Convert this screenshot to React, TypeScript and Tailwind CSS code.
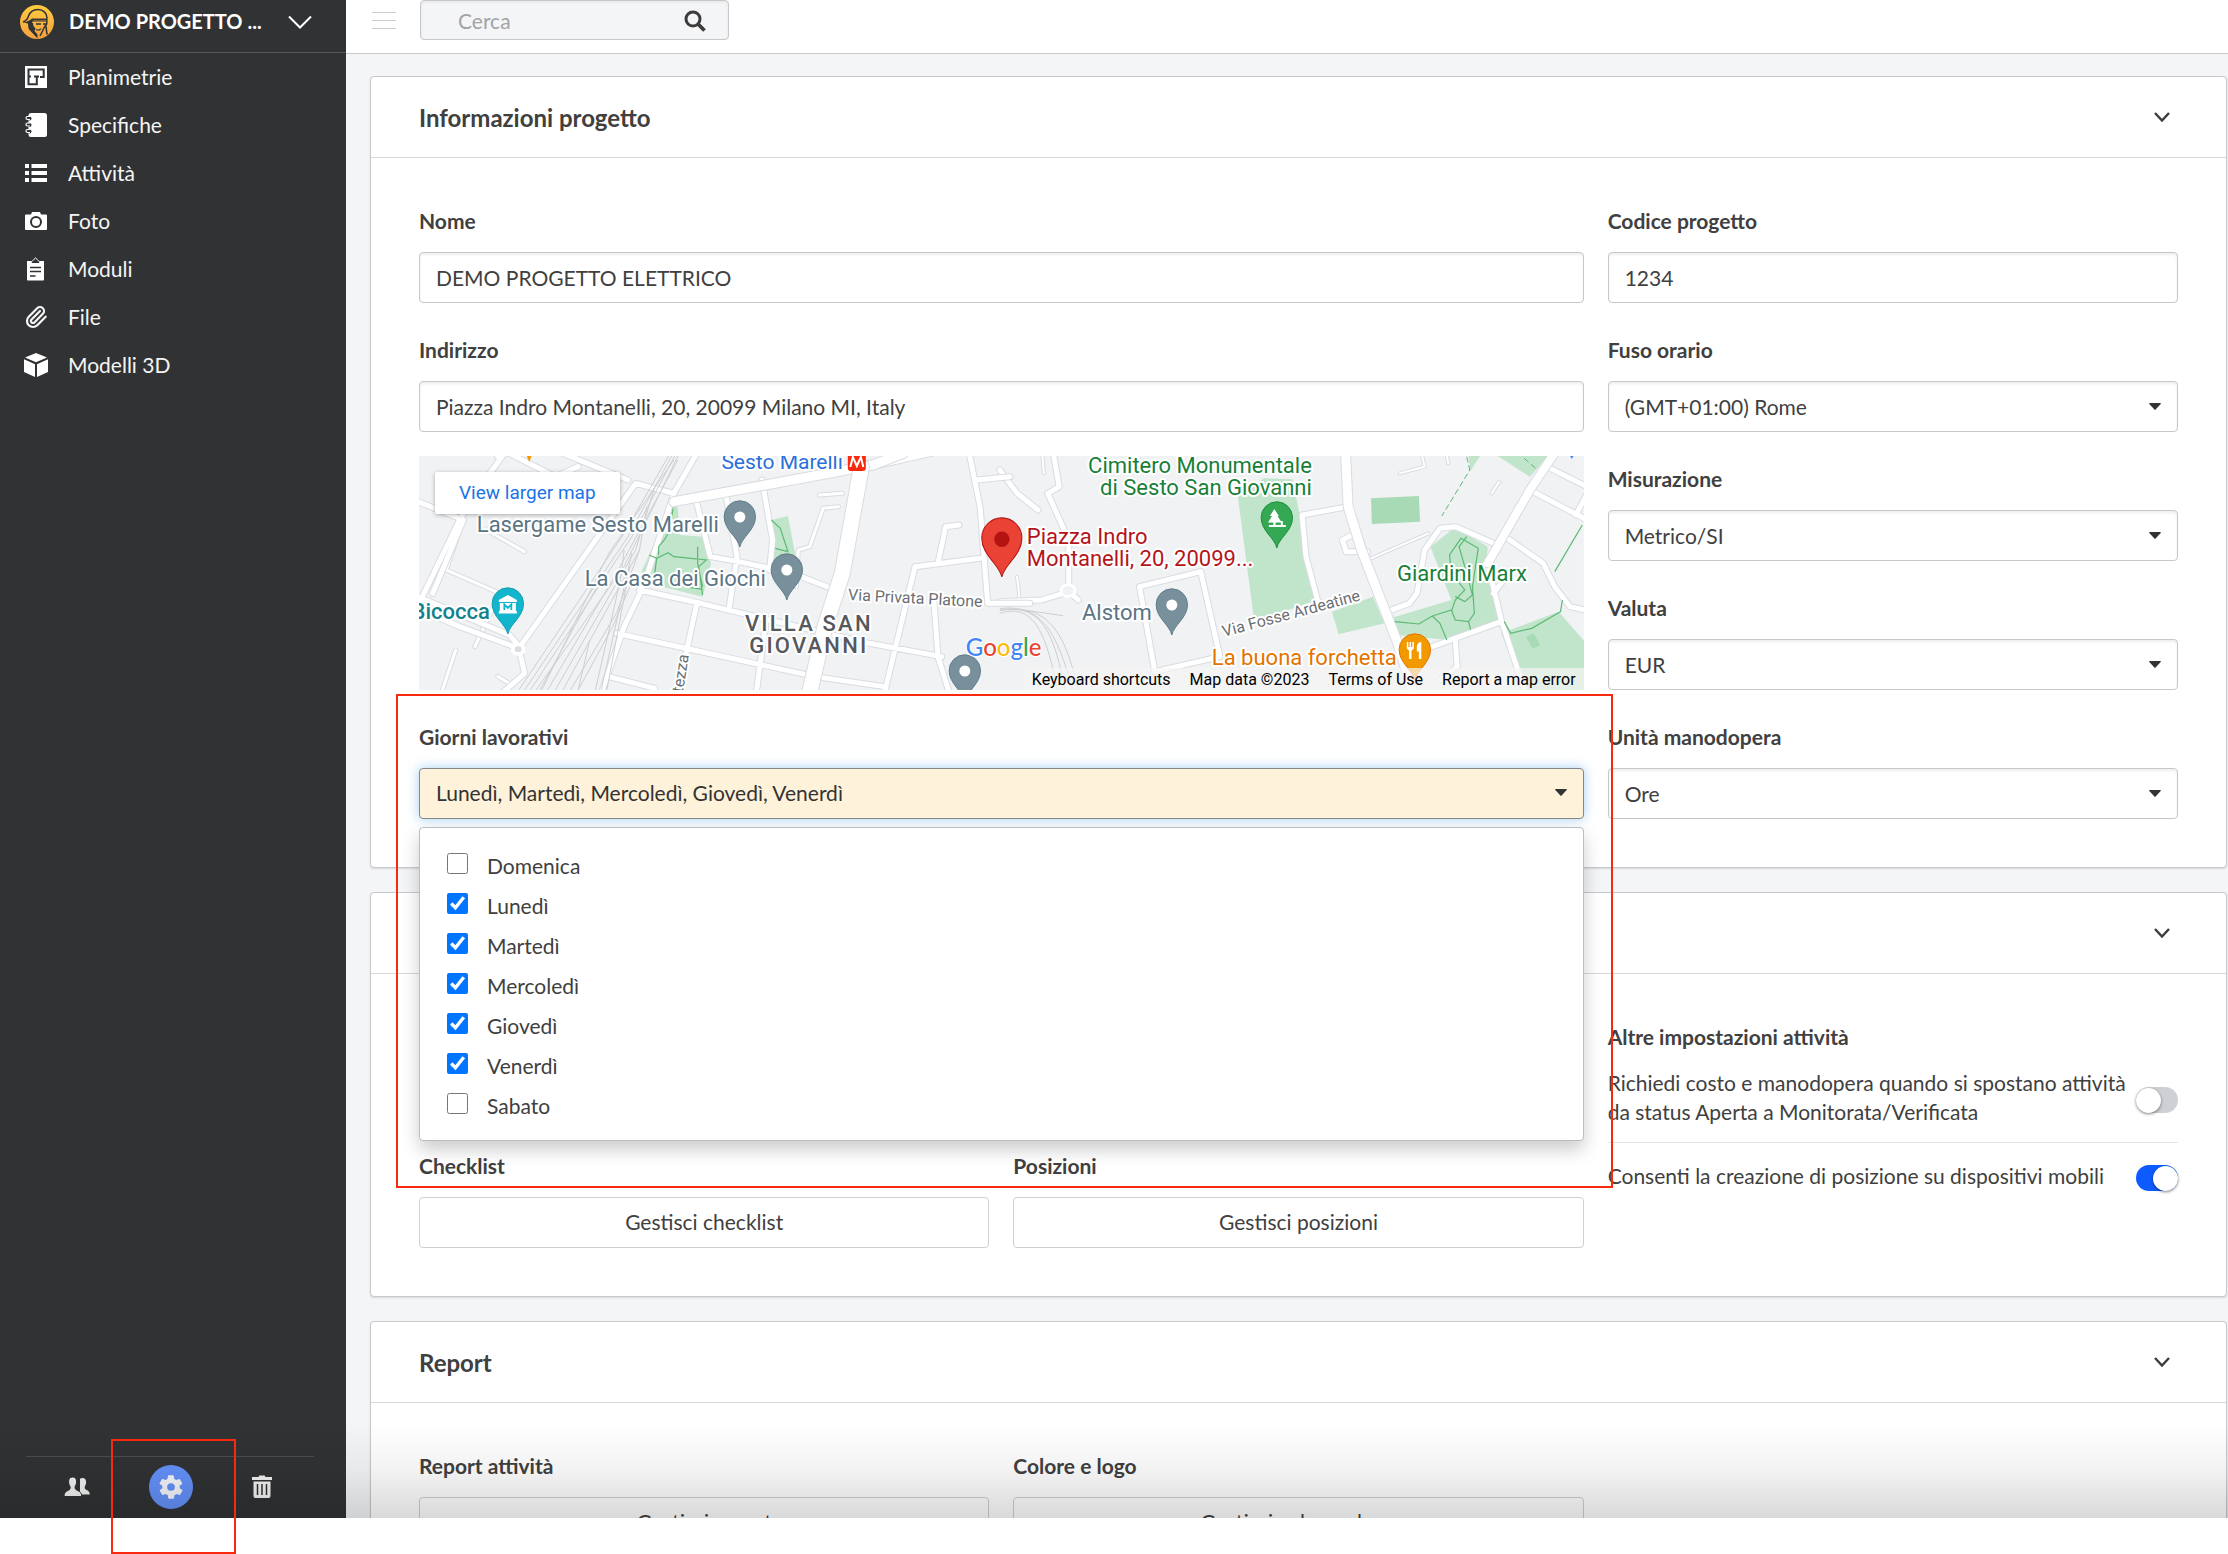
import { useState } from 'react';
import type { ReactNode } from 'react';
import { Paperclip } from 'lucide-react';

interface ChildrenProps {
  children: ReactNode;
}

/* ---------- icons ---------- */

function Logo() {
  return (
    <svg viewBox="0 0 34 34" className="size-[34px] shrink-0" aria-hidden="true">
      <defs>
        <linearGradient id="logo-fill" x1="0" y1="0" x2="0" y2="1">
          <stop offset="0" stopColor="#fdcb3f" />
          <stop offset="1" stopColor="#f5a040" />
        </linearGradient>
      </defs>
      <circle cx="17" cy="17" r="17" fill="url(#logo-fill)" />
      <path d="M3 17c3-1 4.500-2.500 5.500-6C10 7 13.500 4.500 18 4.500c5 0 9 3.500 9 8.500" fill="none" stroke="#303234" strokeWidth="1.500" />
      <path d="M2.500 16.800c4 .4 6.500-.8 9.500-3.300h14v1.800H13.500c-1 1-1.500 2-1.500 3.200H7.500l-5-1.700Z" fill="#303234" />
      <path d="M12 16.500h14v-1H13Z" fill="#303234" />
      <path d="M12 13.600h14.500" stroke="#a9763a" strokeWidth="0.800" />
      <path d="M8 18h5c0 2.500 1 4 2.500 5.500l-1 2.500 3 3.500v4L11 26.500C8.500 25 8 22 8 18Z" fill="#303234" />
      <path d="M26.800 13v5.500c0 2.500-3 3-3.500 6L20 31" fill="none" stroke="#303234" strokeWidth="1.500" />
      <path d="M16 19h5M23 19h3" stroke="#303234" strokeWidth="1.400" />
      <path d="M16 24.500c2 1 4 .5 5-1" fill="none" stroke="#303234" strokeWidth="1.200" />
      <path d="M25 20c2.500 3 .5 7 2.500 9.500" fill="none" stroke="#303234" strokeWidth="1.600" />
    </svg>
  );
}

function PlanIcon() {
  return (
    <svg viewBox="0 0 22 22" className="size-[22px]" aria-hidden="true">
      <rect width="22" height="22" fill="#fff" />
      <path d="M3.500 10V3.500h15.200V11H15M3.500 9v9.300h8.300V10.500M9 10.500h5M3.500 10.500H6" fill="none" stroke="#303234" strokeWidth="2" />
    </svg>
  );
}

function NotebookIcon() {
  return (
    <svg viewBox="0 0 22 24" className="h-6 w-[22px]" aria-hidden="true">
      <path d="M6 0h13.500A2.500 2.500 0 0 1 22 2.500v19a2.500 2.500 0 0 1-2.500 2.500H6a2.500 2.500 0 0 1-2.500-2.500v-19A2.500 2.500 0 0 1 6 0Z" fill="#fff" />
      {[5, 11.5, 18].map((y) => (
        <g key={y}>
          <circle cx="4.500" cy={y + 0.500} r="2" fill="#303234" />
          <path d={`M5 ${y - 1.5}H2.500a1.500 1.500 0 0 0 0 3H5`} fill="none" stroke="#fff" strokeWidth="1.200" />
        </g>
      ))}
    </svg>
  );
}

function ListIcon() {
  return (
    <svg viewBox="0 0 22 18" className="h-[18px] w-[22px]" fill="#fff" aria-hidden="true">
      <path d="M0 0h4v4H0ZM6.500 0H22v4H6.500ZM0 7h4v4H0ZM6.500 7H22v4H6.500ZM0 14h4v4H0ZM6.500 14H22v4H6.500Z" />
    </svg>
  );
}

function CameraIcon() {
  return (
    <svg viewBox="0 0 22 18" className="h-[18px] w-[22px]" aria-hidden="true">
      <path d="M1 2.500h5L7 0h8l1 2.500h5a1 1 0 0 1 1 1V17a1 1 0 0 1-1 1H1a1 1 0 0 1-1-1V3.500a1 1 0 0 1 1-1Z" fill="#fff" />
      <circle cx="11" cy="10" r="5" fill="none" stroke="#303234" strokeWidth="2" />
    </svg>
  );
}

function ClipboardIcon() {
  return (
    <svg viewBox="0 0 22 24" className="h-6 w-[22px]" aria-hidden="true">
      <path d="M2 4h17v18.500a1 1 0 0 1-1 1H3a1 1 0 0 1-1-1Z" fill="#fff" />
      <path d="M6 6.500c0-3 2.500-2.500 3-4 .5-2 2.500-2 3 0 .5 1.500 3 1 3 4Z" fill="#303234" stroke="#fff" strokeWidth="1" />
      <path d="M5 10.500h11M5 14.500h11M5 19h5.500" stroke="#303234" strokeWidth="1.400" />
    </svg>
  );
}

function CubeIcon() {
  return (
    <svg viewBox="0 0 24 24" className="size-6" fill="#fff" aria-hidden="true">
      <path d="M12 0 23 4.500 12 9.300 1 4.500ZM0 6.300l11 4.900V24L0 19ZM24 6.300l-11 4.900V24l11-5Z" />
    </svg>
  );
}

function PeopleIcon() {
  return (
    <svg viewBox="0 0 26 20" className="h-5 w-[26px]" aria-hidden="true">
      <path d="M18.500 1c2.500 0 3.800 2 3.600 4.500-.1 2-.9 3.200-1.300 4-.3 1.500-.1 2.500 1 3.100 2.200 1.200 3.700 1.500 4 4.900H16V1.800c.7-.5 1.500-.8 2.500-.8Z" fill="#f2f2f2" />
      <path d="M8.500 0c2.900 0 4.300 2.200 4.100 5-.1 2-.9 3.400-1.400 4.200-.4 1.800 0 3 1.200 3.700 2.700 1.500 5.100 1.800 5.300 6.600H0c.2-4.800 2.500-5.100 5-6.600 1.200-.7 1.400-1.900 1-3.700C5.400 8.400 4.700 7 4.600 5 4.400 2.200 5.700 0 8.500 0Z" fill="#f2f2f2" stroke="#2d2f31" strokeWidth="1" />
    </svg>
  );
}

function GearIcon() {
  return (
    <svg viewBox="0 0 24 24" className="size-7" fill="#f5f6fa" aria-hidden="true">
      <path d="M19.400 13a7.500 7.500 0 0 0 0-2l2.100-1.600c.2-.2.300-.4.100-.7l-2-3.400c-.1-.2-.4-.3-.6-.2l-2.500 1a7.300 7.300 0 0 0-1.700-1l-.4-2.600a.5.5 0 0 0-.5-.5h-4c-.2 0-.4.2-.5.500l-.4 2.600c-.6.300-1.200.6-1.700 1l-2.500-1c-.2-.1-.5 0-.6.200l-2 3.400c-.1.200-.1.500.1.700L4.600 11a7.500 7.500 0 0 0 0 2l-2.100 1.600c-.2.200-.3.400-.1.700l2 3.400c.1.200.4.300.6.200l2.500-1c.5.400 1.100.7 1.700 1l.4 2.600c0 .3.200.5.500.5h4c.2 0 .4-.2.500-.5l.4-2.600c.6-.3 1.200-.6 1.700-1l2.500 1c.2.100.5 0 .6-.2l2-3.400c.1-.2.100-.5-.1-.7ZM12 15.300a3.300 3.300 0 1 1 0-6.600 3.300 3.300 0 0 1 0 6.600Z" />
    </svg>
  );
}

function TrashIcon() {
  return (
    <svg viewBox="0 0 20 24" className="h-6 w-5" aria-hidden="true">
      <path d="M0 2h6.500l.8-1.500h5.400l.8 1.500H20v3H0Z" fill="#f2f2f2" />
      <path d="M1.500 6.500h17V21a2 2 0 0 1-2 2h-13a2 2 0 0 1-2-2Z" fill="#f2f2f2" />
      <path d="M5.500 9v11M10 9v11M14.500 9v11" stroke="#2d2f31" strokeWidth="1.500" />
    </svg>
  );
}

function CaretDown() {
  return (
    <svg viewBox="0 0 12 7" className="h-[7px] w-3" fill="#333" aria-hidden="true">
      <path d="M.8 0h10.400c.7 0 .9.600.5 1L6.600 6.600a.8.8 0 0 1-1.200 0L.3 1C-.1.600.1 0 .8 0Z" />
    </svg>
  );
}

/* ---------- form parts ---------- */

const controlClass =
  'block h-[51px] w-full rounded-sm border border-[#c8c8cb] bg-white px-4 text-[21px] text-[#404040] shadow-[inset_0_2px_3px_rgba(0,0,0,0.07)] outline-none';

const labelClass = 'mb-4 block text-[21px]/[30px] font-bold';

interface FieldProps {
  id: string;
  label: string;
  children: ReactNode;
}

function Field({ id, label, children }: FieldProps) {
  return (
    <div>
      <label htmlFor={id} className={labelClass}>
        {label}
      </label>
      {children}
    </div>
  );
}

interface InputFieldProps {
  id: string;
  label: string;
  value: string;
}

function TextField({ id, label, value }: InputFieldProps) {
  return (
    <Field id={id} label={label}>
      <input id={id} type="text" defaultValue={value} className={controlClass} />
    </Field>
  );
}

function SelectField({ id, label, value }: InputFieldProps) {
  return (
    <Field id={id} label={label}>
      <div className="relative">
        <select id={id} defaultValue={value} className={`${controlClass} appearance-none`}>
          <option>{value}</option>
        </select>
        <span className="pointer-events-none absolute inset-y-0 right-[17px] flex items-center">
          <CaretDown />
        </span>
      </div>
    </Field>
  );
}

interface ButtonFieldProps {
  id: string;
  label: string;
  action: string;
}

function ButtonField({ id, label, action }: ButtonFieldProps) {
  return (
    <div>
      <h3 id={`${id}-label`} className={labelClass}>
        {label}
      </h3>
      <button
        type="button"
        aria-describedby={`${id}-label`}
        className="h-[51px] w-full rounded-sm border border-[#cfcfd2] pb-0.5 text-center text-[21px]"
      >
        {action}
      </button>
    </div>
  );
}

interface ToggleProps {
  id: string;
  on?: boolean;
  children: ReactNode;
}

function Toggle({ id, on = false, children }: ToggleProps) {
  return (
    <div className="flex items-center justify-between gap-2">
      <label htmlFor={id} className="text-[21px]/[29px]">
        {children}
      </label>
      <input
        id={id}
        type="checkbox"
        role="switch"
        defaultChecked={on}
        className="mt-1.5 flex h-[26px] w-[42px] shrink-0 appearance-none items-center rounded-full bg-[#cfcfd6] before:block before:size-[25px] before:rounded-full before:bg-white before:shadow-[0_1px_3px_rgba(0,0,0,0.5)] checked:justify-end checked:bg-[#0d5bff]"
      />
    </div>
  );
}

interface PanelProps {
  title: string;
  children: ReactNode;
}

function Panel({ title, children }: PanelProps) {
  return (
    <section className="rounded-sm border border-[#c8c8cd] bg-white shadow-[0_1px_2px_rgba(0,0,0,0.12)]">
      <header className="flex h-[81px] items-center justify-between border-b border-[#d8d8db] px-12">
        <h2 className="pt-0.5 text-2xl font-bold">{title}</h2>
        <button type="button" aria-label={title} className="p-2">
          <svg viewBox="0 0 16 10" className="h-2.5 w-4" fill="none" stroke="#3c3c3c" strokeWidth="2.400" aria-hidden="true">
            <path d="m1 1 7 7.500L15 1" />
          </svg>
        </button>
      </header>
      <div className="grid grid-cols-3 gap-x-6 gap-y-8 p-12">{children}</div>
    </section>
  );
}

/* ---------- working days ---------- */

const days = ['Domenica', 'Lunedì', 'Martedì', 'Mercoledì', 'Giovedì', 'Venerdì', 'Sabato'];

function WorkingDays() {
  const [selected, setSelected] = useState(days.slice(1, 6));

  const toggle = (day: string) =>
    setSelected(days.filter((d) => (d === day ? !selected.includes(d) : selected.includes(d))));

  return (
    <div className="relative">
      <Field id="giorni" label="Giorni lavorativi">
        <button
          id="giorni"
          type="button"
          aria-haspopup="listbox"
          aria-expanded="true"
          className="flex h-[51px] w-full items-center justify-between rounded-sm border border-[#85888a] bg-[#fff2da] px-4 pb-0.5 text-[21px] text-[#333] shadow-[0_0_12px_rgba(102,175,233,0.6)]"
        >
          {selected.join(', ')}
          <CaretDown />
        </button>
      </Field>
      <div className="absolute inset-x-0 top-full z-10 mt-2 rounded-sm border border-[#bdbdc0] bg-white px-[27px] pt-[15px] pb-[17px] shadow-[0_9px_18px_rgba(0,0,0,0.2)]">
        {days.map((day) => (
          <label key={day} className="flex h-10 items-center gap-[19px]">
            <input
              type="checkbox"
              checked={selected.includes(day)}
              onChange={() => toggle(day)}
              className="size-[21px] accent-[#0075ff]"
            />
            <span className="pt-1.5 text-[21px]">{day}</span>
          </label>
        ))}
      </div>
      <div className="pointer-events-none absolute -top-7 -right-[29px] -left-[23px] z-20 h-[494px] border-2 border-[#f8290f]" />
    </div>
  );
}

/* ---------- map ---------- */

interface PinProps {
  x: number;
  y: number;
  fill: string;
  stroke: string;
  children?: ReactNode;
}

function Pin({ x, y, fill, stroke, children }: PinProps) {
  return (
    <g transform={`translate(${x} ${y})`}>
      <path d="M0 0C-2-10-15.700-17-15.700-30.500a15.700 15.700 0 0 1 31.400 0C15.700-17 2-10 0 0Z" fill={fill} stroke={stroke} />
      {children ?? <circle cy="-30" r="5.500" fill="#fff" />}
    </g>
  );
}

const westRoads = [
  'M-10 170 140 240 60 460',
  'M260 20 190 130 130 240 20 500M230 50 250 10',
  'M400 40 570 120M260 40 380 110 440 80',
  'M-10 490 130 560 285 625 300 700 240 760M0 460 260 585 290 625',
  'M285 625 350 520 590 130 690 160',
  'M690 185 1000 120 1210 80 1400 30 1568 -10',
  'M760 20 690 160 610 440 560 560 500 760',
  'M750 190 785 350 860 365 1000 400 1090 440',
  'M825 160 855 350 835 500M920 120 948 300 940 390',
  'M600 450 760 490 940 540 1200 610 1390 650',
  'M540 580 900 670 1060 710 1240 740M520 710 640 745',
  'M750 490 720 650 700 760M930 550 905 760',
  'M1320 380 1240 760M1320 380 1490 355M1380 370 1400 260 1435 255',
  'M1370 490 1380 650 1410 760M1460 30 1490 200 1510 490 1620 490',
  'M1480 120 1568 110',
];

const westLanes = [
  'M200 270 300 335M140 240 95 390 235 460 170 620 M120 630 85 750',
  'M1070 165 1130 160M1120 200 1080 205 1045 320 1015 330 1010 440M230 710 260 730',
];

const eastRoads = [
  'M0 90 45 160 100 210M140 40 155 140 125 160 180 300 180 440',
  'M0 485 110 480 180 455 205 480',
  'M790 225 910 200M790 225 800 350 830 480M365 440 525 395 575 650 405 695 365 440',
  'M920 285 895 300 905 335 960 335',
  'M1455 30 1385 150 1320 290 1275 370 1310 540 1385 800',
  'M1110 330 1150 265 1190 260 1290 310M1090 460 1110 330M1000 520 1070 490 1090 460',
  'M1320 290 1420 370 1450 440 1490 500 1568 520M1385 150 1568 260M1430 80 1568 160M1505 225 1568 90',
  'M1310 545 1130 620 1060 640M1190 600 1195 680 1150 720M1290 460 1330 400',
];

const eastLanes = ['M110 30 115 100M1045 100 1110 80 1100 30M1165 30 1172 70M45 410 52 480M1285 160 1305 125M970 355 1120 280'];

interface RoadsProps {
  paths: string[];
  width: number;
}

function Roads({ paths, width }: RoadsProps) {
  const d = paths.join('');
  return (
    <g fill="none" strokeLinejoin="round" strokeLinecap="round">
      <path d={d} stroke="#d9dce1" strokeWidth={width + 2} vectorEffect="non-scaling-stroke" />
      <path d={d} stroke="#fff" strokeWidth={width} vectorEffect="non-scaling-stroke" />
    </g>
  );
}

function MapDrawing() {
  return (
    <svg
      viewBox="0 0 1165 234"
      preserveAspectRatio="xMidYMid slice"
      className="absolute inset-0 size-full font-[Roboto,sans-serif]"
      role="img"
      aria-label="Piazza Indro Montanelli"
    >
      <rect width="1165" height="234" fill="#f0f2f4" />

      <g transform="translate(581 -16) scale(.3827 .3333)">
        <path d="M622 170 690 115 765 118 800 320 830 480 665 545Z" fill="#c1e5cb" />
        <path d="M868 515 975 470 1005 550 885 583Z" fill="#c1e5cb" />
        <path d="M970 175 1095 168 1098 245 972 252Z" fill="#a8dab5" />
        <path d="M1125 320 1190 262 1275 320 1270 390 1310 540 1170 600 1040 585 1020 535 1180 480Z" fill="#c1e5cb" />
        <path d="M1290 40 1440 40 1385 110ZM1225 40H1260L1228 95Z" fill="#c1e5cb" />
        <path d="M1310 580 1460 515 1540 620V750H1370Z" fill="#c1e5cb" />
        <path d="M1375 590 1395 580 1412 615 1392 626Z" fill="#a8dab5" />
        <Roads paths={eastLanes} width={2} />
        <Roads paths={eastRoads} width={5} />
        <Roads paths={['M903 30 910 200 945 330 1040 610 1080 760']} width={9} />
        <Roads paths={['M1455 30 1385 150 1275 370']} width={8} />
        <circle cx="178" cy="452" r="18" fill="#f0f2f4" stroke="#fff" strokeWidth="8" />
        <path
          d="M0 520C80 490 120 560 150 750M0 512C100 490 140 560 170 750M0 506C110 490 150 580 190 750M0 510C130 490 170 580 205 750M60 510 165 527"
          fill="none"
          stroke="#cccfd3"
          vectorEffect="non-scaling-stroke"
        />
        <path
          d="M1032 545 1095 552 1130 528 1180 510 1190 540 1225 545 1240 520 1235 440 1250 325 1205 295 1175 345 1180 400 1215 450 1190 480 1180 515M1220 290 1200 320 1220 400 1235 465 1215 485 1190 470M1130 528 1150 550 1168 600M1225 545 1230 570M1318 545 1335 580 1390 565 1465 515 1470 480M1522 255 1450 395"
          fill="none"
          stroke="#5bb974"
          strokeWidth="1.200"
          vectorEffect="non-scaling-stroke"
        />
        <path d="M1220 50 1228 90 1155 228M1370 55 1400 85" fill="none" stroke="#5bb974" strokeDasharray="6 3" vectorEffect="non-scaling-stroke" />
      </g>

      <g transform="translate(-9 -16) scale(.3827 .3333)">
        <path d="M685 195 700 200 705 285 765 290 787 370 765 470 660 440 605 395Z" fill="#c1e5cb" />
        <path d="M945 240 988 228 1008 350 950 360Z" fill="#c1e5cb" />
        <Roads paths={westLanes} width={3} />
        <Roads paths={westRoads} width={5} />
        <Roads paths={['M690 185 1000 120 1210 75 1290 40']} width={9} />
        <Roads paths={['M1180 80 1130 400 1085 560 1040 780']} width={15} />
        <path
          d="M680 40 560 280 285 750M688 40 570 290 300 750M696 40 580 290 315 750M704 40 560 380 330 750M690 60 520 340 345 750M700 60 540 400 360 750M640 140 590 330 380 750M620 200 600 330 400 750M600 330 540 520 420 750M590 400 530 560 440 750M560 330 550 420 485 750M580 340 500 750M575 380 515 750M500 420 430 560 340 750M470 600 440 750"
          fill="none"
          stroke="#cccfd3"
          vectorEffect="non-scaling-stroke"
        />
        <path
          d="M625 345 645 355 675 338 690 350 775 360 755 380 765 465M752 320V370L765 440M645 355 640 400M680 270 665 300 650 320V345M688 205 683 240M945 240 968 265 988 335 955 325M720 440 765 448"
          fill="none"
          stroke="#5bb974"
          strokeWidth="1.200"
          vectorEffect="non-scaling-stroke"
        />
        <circle cx="283" cy="628" r="14" fill="#dadce0" stroke="#fff" strokeWidth="10" />
        <path d="M303 40h18l-9 26Z" fill="#f29900" />
      </g>

      <path d="M1149-4h8l-4 7Z" fill="#4285f4" />

      <Pin x={321} y={91} fill="#78909c" stroke="#607d8b" />
      <Pin x={368} y={144} fill="#78909c" stroke="#607d8b" />
      <Pin x={546} y={245} fill="#78909c" stroke="#607d8b" />
      <Pin x={753} y={179} fill="#78909c" stroke="#607d8b" />
      <Pin x={89} y={178} fill="#12b5cb" stroke="#129eaf">
        <path d="m0-39 9 5v2H-9v-2ZM-8-31H8v10H-8ZM-9-23H9v2.500H-9Z" fill="#fff" />
        <path d="M-3.500-24v-5.500L0-26l3.500-3.500v5.500" fill="none" stroke="#12b5cb" strokeWidth="1.800" />
      </Pin>
      <Pin x={858} y={92} fill="#34a853" stroke="#1e8e3e">
        <path d="m-2.500-39 4.500 7H.800l4 6.500h-6V-23h5.200v-4h2v4H9v2H-8v-2h4.500v-2.500h-5.300l4-6.500H-7Z" fill="#fff" />
      </Pin>
      <Pin x={996} y={224} fill="#f29900" stroke="#e37400">
        <path d="M-8-38h1.500v5h1.300v-5h1.400v5h1.300v-5H-1v6.500l-2.300 2.300V-21h-2.400v-8.200L-8-31.500ZM2-33c0-3 2-5 4.500-5v17H4v-7.500H2Z" fill="#fff" />
      </Pin>
      <g transform="translate(583 121) scale(1.280)">
        <path d="M0 0C-2-10-15.700-17-15.700-30.500a15.700 15.700 0 0 1 31.400 0C15.700-17 2-10 0 0Z" fill="#ea4335" stroke="#b31412" strokeWidth="0.800" />
        <circle cy="-29.500" r="6" fill="#b31412" />
      </g>

      <rect x="429" y="-4" width="18" height="19" rx="3" fill="#f8290f" />
      <path d="M431.500 11 434 1l4 9 4-9 2.500 10" fill="none" stroke="#fff" strokeWidth="2" />

      <g stroke="#fff" strokeWidth="4" strokeLinejoin="round" paintOrder="stroke">
        <text x="424" y="13" fontSize="21" textAnchor="end" fill="#2a6fdb">
          Sesto Marelli
        </text>
        <g fontSize="22" fill="#5b7483" textAnchor="end">
          <text x="300" y="76">Lasergame Sesto Marelli</text>
          <text x="347" y="130">La Casa dei Giochi</text>
          <text x="733" y="164">Alstom</text>
          <text x="71" y="163" fill="#12838d" fontWeight="500">Bicocca</text>
          <text x="978" y="209" fill="#e37400">La buona forchetta</text>
        </g>
        <g fontSize="22" fill="#188038" textAnchor="end">
          <text x="893" y="17">Cimitero Monumentale</text>
          <text x="893" y="39">di Sesto San Giovanni</text>
          <text x="1108" y="125">Giardini Marx</text>
        </g>
        <g fontSize="22" fill="#b3151b">
          <text x="608" y="88">Piazza Indro</text>
          <text x="608" y="110">Montanelli, 20, 20099...</text>
        </g>
        <g fontSize="22" fill="#55585d" fontWeight="500" textAnchor="middle" className="tracking-widest">
          <text x="390" y="175">VILLA SAN</text>
          <text x="390" y="197">GIOVANNI</text>
        </g>
        <g fontSize="16" fill="#6b6f75">
          <text transform="translate(429 144) rotate(3)">Via Privata Platone</text>
          <text transform="translate(805 181) rotate(-15)">Via Fosse Ardeatine</text>
          <text transform="translate(264 237) rotate(-81)">tezza</text>
        </g>
      </g>

      <text x="547" y="200" fontSize="24" fontWeight="500" stroke="#fff" strokeWidth="2" paintOrder="stroke" className="font-[Lato,sans-serif]">
        <tspan fill="#4285f4">G</tspan>
        <tspan fill="#ea4335">o</tspan>
        <tspan fill="#fbbc05">o</tspan>
        <tspan fill="#4285f4">g</tspan>
        <tspan fill="#34a853">l</tspan>
        <tspan fill="#ea4335">e</tspan>
      </text>
    </svg>
  );
}

function AddressMap() {
  return (
    <div className="relative h-[234px] overflow-hidden font-[Roboto,sans-serif]">
      <MapDrawing />
      <a
        href="#map"
        className="absolute top-4 left-4 rounded-xs bg-white px-6 py-2 text-[19px]/[26px] text-[#1a73e8] shadow-[0_1px_4px_rgba(0,0,0,0.3)]"
      >
        View larger map
      </a>
      <div className="absolute right-0 bottom-0 flex h-[22px] items-center gap-[19px] bg-[#f5f5f5]/70 px-2 pt-0.5 text-base text-black">
        <button type="button">Keyboard shortcuts</button>
        <span>Map data ©2023</span>
        <a href="#terms">Terms of Use</a>
        <a href="#report">Report a map error</a>
      </div>
    </div>
  );
}

/* ---------- page ---------- */

const navItems = [
  { label: 'Planimetrie', icon: <PlanIcon /> },
  { label: 'Specifiche', icon: <NotebookIcon /> },
  { label: 'Attività', icon: <ListIcon /> },
  { label: 'Foto', icon: <CameraIcon /> },
  { label: 'Moduli', icon: <ClipboardIcon /> },
  { label: 'File', icon: <Paperclip className="size-6" strokeWidth={2.2} /> },
  { label: 'Modelli 3D', icon: <CubeIcon /> },
];

function Sidebar() {
  return (
    <aside className="flex w-[346px] shrink-0 flex-col bg-[#303234] text-[#f5f5f5]">
      <button type="button" className="flex h-[53px] items-center border-b border-[#55575a] pb-2 pl-5 text-xl font-bold text-white">
        <Logo />
        <span className="ml-[15px] w-[200px] pb-0.5 text-left">DEMO PROGETTO ...</span>
        <svg viewBox="0 0 24 14" className="ml-[19px] h-3.5 w-6" fill="none" stroke="#fff" strokeWidth="2" aria-hidden="true">
          <path d="m1 1.500 11 11 11-11" />
        </svg>
      </button>
      <nav className="flex flex-1 flex-col">
        {navItems.map((item) => (
          <a key={item.label} href="#nav" className="flex h-12 items-center gap-5 pl-6 text-[21px]">
            <span className="flex w-6 justify-center">{item.icon}</span>
            {item.label}
          </a>
        ))}
      </nav>
      <div className="mr-8 mb-[9px] ml-[26px] flex items-center gap-[59px] border-t border-[#4b4e50] pt-2 pl-[38px]">
        <button type="button" aria-label="Persone">
          <PeopleIcon />
        </button>
        <button type="button" aria-label="Impostazioni" className="relative flex size-11 items-center justify-center rounded-full bg-[#6491fa]">
          <GearIcon />
          <span className="pointer-events-none absolute -top-[26px] -left-[38px] z-20 h-[115px] w-[125px] border-2 border-[#f8290f]" />
        </button>
        <button type="button" aria-label="Cestino">
          <TrashIcon />
        </button>
      </div>
    </aside>
  );
}

function TopBar() {
  return (
    <div className="flex h-[54px] shrink-0 items-start gap-6 border-b border-[#c8c8cb] bg-white pl-[26px]">
      <button type="button" aria-label="Menu" className="pt-3">
        <svg viewBox="0 0 24 18" className="h-[18px] w-6" stroke="#ccc" strokeWidth="1" aria-hidden="true">
          <path d="M0 .5h24M0 8.500h24M0 16.500h24" />
        </svg>
      </button>
      <form className="flex h-10 w-[309px] items-center rounded-sm border border-[#c8c8cb] bg-[#f4f5f7] pr-[22px] pl-[37px] shadow-[inset_0_1px_3px_rgba(0,0,0,0.08)]">
        <input
          type="search"
          aria-label="Cerca"
          placeholder="Cerca"
          className="min-w-0 flex-1 bg-transparent pt-0.5 text-[21px] outline-none placeholder:text-[#a3a3a6]"
        />
        <button type="submit" aria-label="Avvia ricerca" className="pt-0.5">
          <svg viewBox="0 0 22 22" className="size-[22px]" fill="none" stroke="#3c3c3c" aria-hidden="true">
            <circle cx="9" cy="9" r="7" strokeWidth="3" />
            <path d="m14 14 6.500 6.500" strokeWidth="3.800" />
          </svg>
        </button>
      </form>
    </div>
  );
}

function Content({ children }: ChildrenProps) {
  return <main className="flex min-h-0 flex-1 flex-col gap-6 overflow-hidden bg-[#f4f5f7] pt-[22px] pr-px pl-6">{children}</main>;
}

export default function App() {
  return (
    <div className="min-h-screen bg-white font-[Lato,sans-serif] text-[#404040]">
      <div className="relative flex h-[calc(100vh-36px)]">
        <Sidebar />
        <div className="flex min-w-0 flex-1 flex-col">
          <TopBar />
          <Content>
            <Panel title="Informazioni progetto">
              <div className="col-span-2 flex flex-col gap-8">
                <TextField id="nome" label="Nome" value="DEMO PROGETTO ELETTRICO" />
                <div className="flex flex-col gap-6">
                  <TextField id="indirizzo" label="Indirizzo" value="Piazza Indro Montanelli, 20, 20099 Milano MI, Italy" />
                  <AddressMap />
                </div>
                <WorkingDays />
              </div>
              <div className="flex flex-col gap-8">
                <TextField id="codice" label="Codice progetto" value="1234" />
                <SelectField id="fuso" label="Fuso orario" value="(GMT+01:00) Rome" />
                <SelectField id="misurazione" label="Misurazione" value="Metrico/SI" />
                <SelectField id="valuta" label="Valuta" value="EUR" />
                <SelectField id="manodopera" label="Unità manodopera" value="Ore" />
              </div>
            </Panel>

            <Panel title="Attività">
              <div className="col-span-2 grid grid-cols-2 gap-x-6 gap-y-8">
                <div className="col-span-2">
                  <TextField id="attivita" label="Attività" value="" />
                </div>
                <ButtonField id="checklist" label="Checklist" action="Gestisci checklist" />
                <ButtonField id="posizioni" label="Posizioni" action="Gestisci posizioni" />
              </div>
              <div>
                <h3 className={labelClass}>Altre impostazioni attività</h3>
                <div className="mb-4 border-b border-[#e4e4e7] pb-4">
                  <Toggle id="richiedi-costo">
                    Richiedi costo e manodopera quando si spostano attività da status Aperta a Monitorata/Verificata
                  </Toggle>
                </div>
                <Toggle id="consenti-posizione" on>
                  Consenti la creazione di posizione su dispositivi mobili
                </Toggle>
              </div>
            </Panel>

            <Panel title="Report">
              <ButtonField id="report" label="Report attività" action="Gestisci report" />
              <ButtonField id="colore" label="Colore e logo" action="Gestisci colore e logo" />
            </Panel>
          </Content>
        </div>
        <div className="pointer-events-none absolute inset-x-0 bottom-0 h-24 bg-linear-to-t from-black/15 via-black/5 to-transparent" />
      </div>
    </div>
  );
}
